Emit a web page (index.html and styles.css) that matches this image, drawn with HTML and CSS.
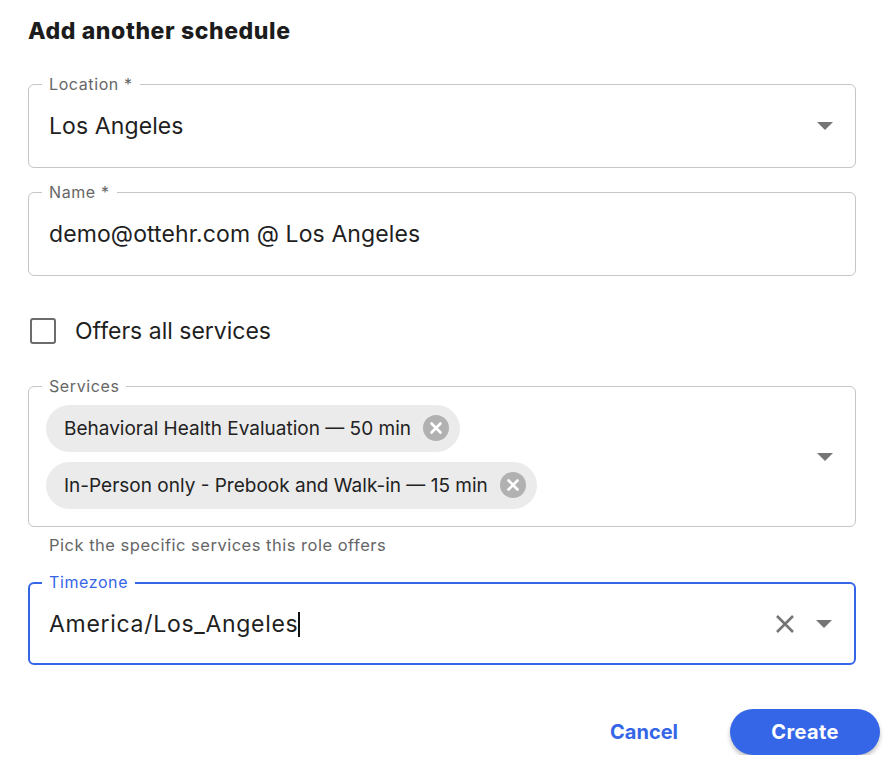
FILE: index.html
```html
<!DOCTYPE html>
<html lang="en">
  <head>
    <meta charset="UTF-8" />
    <meta name="viewport" content="width=device-width, initial-scale=1.0" />
    <title>Add another schedule</title>
    <link rel="stylesheet" href="styles.css">
  </head>
  <body>
    <div class="dialog">
      <h2 class="title">Add another schedule</h2>

      <div class="field field-location">
        <span class="field-label">Location *</span>
        <span class="field-value">Los Angeles</span>
        <svg class="arrow" width="16" height="8" viewBox="0 0 16 8"><path d="M0 0h16L8 8z" fill="#757575"/></svg>
      </div>

      <div class="field field-name">
        <span class="field-label">Name *</span>
        <span class="field-value">demo@ottehr.com @ Los Angeles</span>
      </div>

      <label class="check-row">
        <span class="checkbox"></span>
        <span class="check-text">Offers all services</span>
      </label>

      <div class="field field-services">
        <span class="field-label">Services</span>
        <div class="chips">
          <div class="chip">
            <span>Behavioral Health Evaluation — 50 min</span>
            <svg class="chip-del" width="26" height="26" viewBox="0 0 26 26"><circle cx="13" cy="13" r="13" fill="#b1b1b1"/><path d="M8.5 8.5l9 9M17.5 8.5l-9 9" stroke="#fff" stroke-width="2.6" stroke-linecap="round"/></svg>
          </div>
          <div class="chip">
            <span>In-Person only - Prebook and Walk-in — 15 min</span>
            <svg class="chip-del" width="26" height="26" viewBox="0 0 26 26"><circle cx="13" cy="13" r="13" fill="#b1b1b1"/><path d="M8.5 8.5l9 9M17.5 8.5l-9 9" stroke="#fff" stroke-width="2.6" stroke-linecap="round"/></svg>
          </div>
        </div>
        <svg class="arrow" width="16" height="8" viewBox="0 0 16 8"><path d="M0 0h16L8 8z" fill="#757575"/></svg>
      </div>
      <p class="helper">Pick the specific services this role offers</p>

      <div class="field field-timezone">
        <span class="field-label">Timezone</span>
        <span class="field-value">America/Los_Angeles<span class="caret"></span></span>
        <svg class="clear" width="20" height="20" viewBox="0 0 20 20"><path d="M2 2l16 16M18 2L2 18" stroke="#757575" stroke-width="2.6"/></svg>
        <svg class="arrow" width="16" height="8" viewBox="0 0 16 8"><path d="M0 0h16L8 8z" fill="#757575"/></svg>
      </div>

      <div class="actions">
        <button class="btn-text">Cancel</button>
        <button class="btn-main">Create</button>
      </div>
    </div>
  </body>
</html>
```

FILE: styles.css
```css
body {
  font-family: Inter, Roboto, sans-serif;
  margin: 0;
  padding: 0;
  background: #ffffff;
  color: #1f1f1f;
}

.dialog {
  padding: 18px 0 0 28px;
  width: 828px;
}

.title {
  margin: 0;
  font-size: 23px;
  line-height: 26px;
  font-weight: 800;
  letter-spacing: 0.6px;
  color: #1c1c1c;
}

/* outlined text fields */
.field {
  position: relative;
  box-sizing: border-box;
  border: 1px solid #c6c6c6;
  border-radius: 6px;
  display: flex;
  align-items: center;
  padding: 0 22px 0 20px;
}

.field-label {
  position: absolute;
  top: -10px;
  left: 13px;
  padding: 0 7px;
  background: #ffffff;
  font-size: 16px;
  line-height: 18px;
  letter-spacing: 0.6px;
  color: #666666;
}

.field-value {
  flex: 1;
  font-size: 23px;
  line-height: 28px;
  letter-spacing: 0.1px;
  color: #1f1f1f;
}

.arrow {
  flex: none;
}

.field-location {
  margin-top: 40px;
  height: 84px;
}

.field-name {
  margin-top: 24px;
  height: 84px;
}

.check-row {
  display: flex;
  align-items: center;
  height: 26px;
  margin-top: 42px;
  padding-left: 2px;
}

.checkbox {
  width: 26px;
  height: 26px;
  box-sizing: border-box;
  border: 2.5px solid #6c6c6c;
  border-radius: 3px;
}

.check-text {
  margin-left: 19px;
  font-size: 23px;
  line-height: 26px;
  color: #1f1f1f;
}

.field-services {
  margin-top: 42px;
  height: 141px;
  padding-left: 17px;
}

.chips {
  flex: 1;
  display: flex;
  flex-direction: column;
  align-items: flex-start;
  gap: 10px;
}

.chip {
  display: flex;
  align-items: center;
  height: 47px;
  padding: 0 11px 0 18px;
  border-radius: 24px;
  background: #ebebeb;
  font-size: 19px;
  color: #222222;
}

.chip-del {
  margin-left: 12px;
}

.helper {
  margin: 8px 0 0 21px;
  font-size: 16.5px;
  line-height: 20px;
  letter-spacing: 0.5px;
  color: #666666;
}

.field-timezone {
  margin-top: 27px;
  height: 83px;
  border: 2.5px solid #3566e8;
  padding-left: 19px;
}

.field-timezone .field-label {
  color: #3566e8;
  top: -11px;
  left: 12px;
}

.field-timezone .field-value {
  letter-spacing: 0.7px;
}

.caret {
  display: inline-block;
  width: 2px;
  height: 25px;
  background: #111111;
  vertical-align: -5px;
}

.clear {
  margin-right: 21px;
}

.actions {
  display: flex;
  justify-content: flex-end;
  align-items: center;
  margin-top: 44px;
  margin-right: -24px;
  gap: 34px;
}

.btn-text {
  border: none;
  background: none;
  font-family: inherit;
  font-size: 20px;
  font-weight: 700;
  color: #3566e8;
  padding: 8px 18px;
  cursor: pointer;
}

.btn-main {
  border: none;
  background: #3566e8;
  color: #ffffff;
  font-family: inherit;
  font-size: 20px;
  font-weight: 700;
  letter-spacing: 0.4px;
  width: 150px;
  height: 46px;
  border-radius: 23px;
  box-shadow: 0 3px 4px rgba(0, 0, 0, 0.25);
  cursor: pointer;
}
```
